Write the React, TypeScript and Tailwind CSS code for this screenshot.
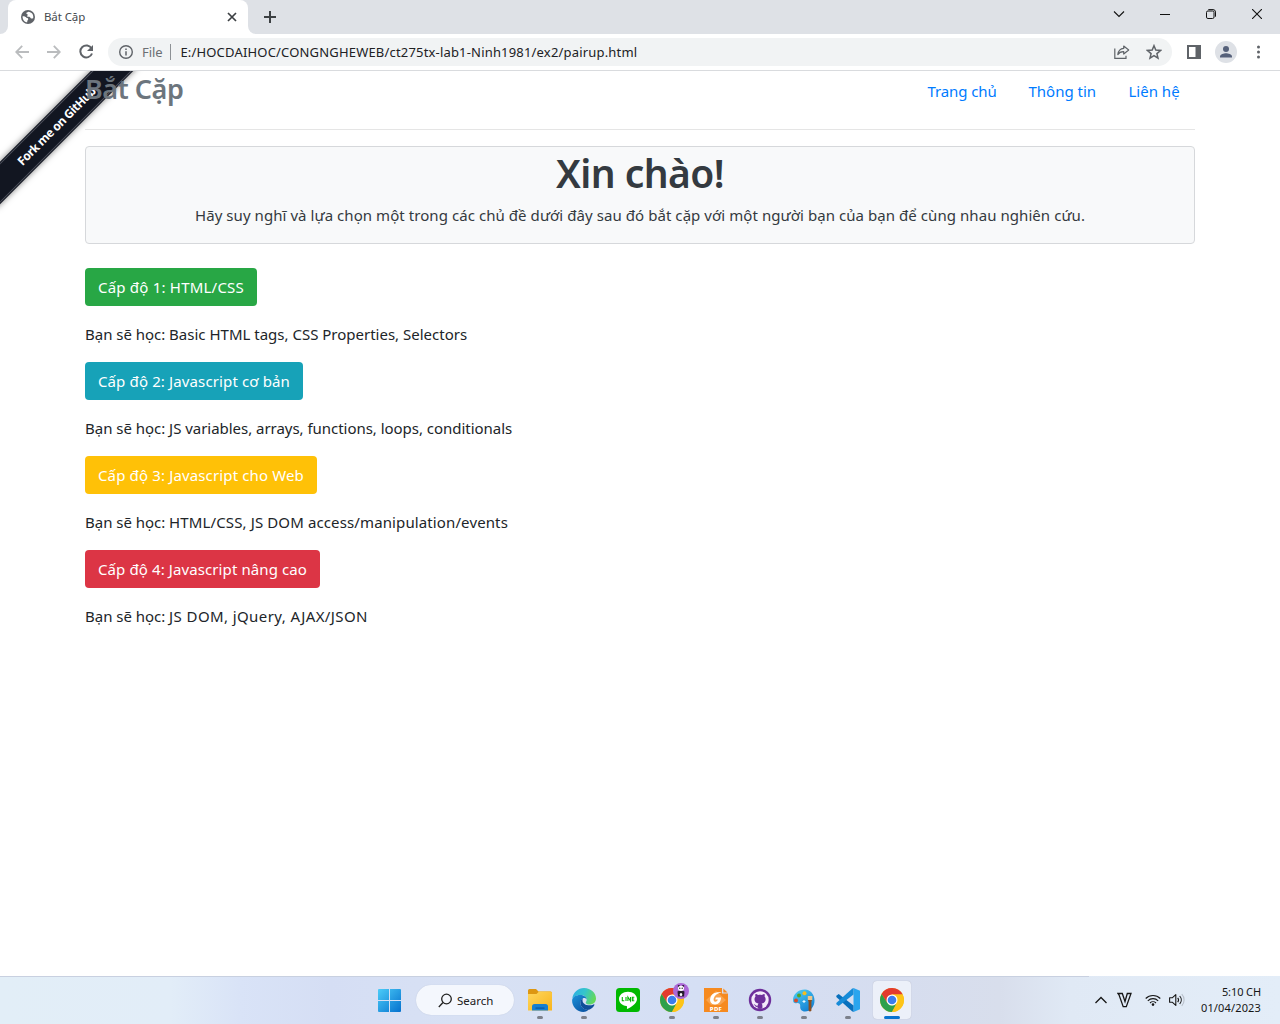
import type { ReactNode } from "react";

const levels = [
  {
    label: "Cấp độ 1: HTML/CSS",
    button: "w-[172px] bg-[#28a745] tracking-[0.21px]",
    intro: "tracking-[-0.02px]",
    text: "Basic HTML tags, CSS Properties, Selectors",
    spacing: "tracking-[0px]",
  },
  {
    label: "Cấp độ 2: Javascript cơ bản",
    button: "w-[218px] bg-[#17a2b8] tracking-[0.13px]",
    intro: "tracking-[-0.02px]",
    text: "JS variables, arrays, functions, loops, conditionals",
    spacing: "tracking-[-0.034px]",
  },
  {
    label: "Cấp độ 3: Javascript cho Web",
    button: "w-[232px] bg-[#ffc107] tracking-[0.14px]",
    intro: "tracking-[-0.02px]",
    text: "HTML/CSS, JS DOM access/manipulation/events",
    spacing: "tracking-[0.12px]",
  },
  {
    label: "Cấp độ 4: Javascript nâng cao",
    button: "w-[235px] bg-[#dc3545] tracking-[0.1px]",
    intro: "tracking-[-0.02px]",
    text: "JS DOM, jQuery, AJAX/JSON",
    spacing: "tracking-[0.4px]",
  },
];

function GlobeIcon() {
  return (
    <svg width="14" height="14" viewBox="0 0 14 14">
      <circle cx="7" cy="7" r="7" fill="#5f6368" />
      <path d="M1.6 6.2c1.7-.2 3 .4 3.7 1.4.5.8 1.700.4 1.900 1.300.2.9-.8 1.300-.9 2.100l-.1 1.300C3.400 12 1.400 9.500 1.600 6.200z" fill="#fff" />
      <path d="M7.300 1.700c-.9.7-2 .8-2 1.600 0 .9 1.300.7 1.400 1.500.1.700-.7 1-.5 1.600.3.800 1.700.2 2.500.5.900.400.700 1.300 1.500 1.600.700.200 1.300-.3 2-.2C13 4.800 10.800 2 7.300 1.700z" fill="#fff" />
    </svg>
  );
}

function TabStrip() {
  return (
    <div className="flex h-[34px] bg-[#dee1e6]">
      <div className="flex w-2 items-end bg-white">
        <div className="h-full w-full rounded-br-lg bg-[#dee1e6]" />
      </div>
      <div className="flex w-60 items-center rounded-t-lg bg-white pl-[13px] pr-[11px]">
        <GlobeIcon />
        <span className="ml-[9px] flex-1 text-[11.5px] leading-4 tracking-[-0.1px] text-[#45494d]">Bắt Cặp</span>
        <svg width="10" height="10" viewBox="0 0 10 10" stroke="#3c4043" strokeWidth="1.7">
          <path d="M1 1l8 8M9 1L1 9" />
        </svg>
      </div>
      <div className="w-2 bg-white">
        <div className="h-full w-full rounded-bl-lg bg-[#dee1e6]" />
      </div>
      <div className="flex w-7 items-center justify-center">
        <svg width="12" height="12" viewBox="0 0 12 12" stroke="#3c4043" strokeWidth="2">
          <path d="M6 0v12M0 6h12" />
        </svg>
      </div>
      <div className="ml-auto flex h-7 items-center text-[#111]">
        <span className="flex w-[46px] justify-center">
          <svg width="12" height="8" viewBox="0 0 12 8" fill="none" stroke="currentColor" strokeWidth="1.1">
            <path d="M1 1.500l5 5 5-5" />
          </svg>
        </span>
        <span className="flex w-[46px] justify-center">
          <svg width="10" height="2" viewBox="0 0 10 2" fill="currentColor" shapeRendering="crispEdges">
            <path d="M0 1h10v1H0z" />
          </svg>
        </span>
        <span className="flex w-[46px] justify-center">
          <svg width="10" height="10" viewBox="0 0 10 10" fill="none" stroke="currentColor">
            <rect x=".5" y="2" width="7.500" height="7.500" rx="1.400" />
            <path d="M2.300.6h4.700a2.500 2.500 0 0 1 2.500 2.500v4.600" />
          </svg>
        </span>
        <span className="flex w-[46px] justify-center">
          <svg width="10" height="10" viewBox="0 0 10 10" fill="none" stroke="currentColor" strokeWidth="1.100">
            <path d="M0 0l10 10M10 0L0 10" />
          </svg>
        </span>
      </div>
    </div>
  );
}

function AddressBar() {
  return (
    <div className="flex h-[37px] items-center border-b border-[#d9dbde] bg-white">
      <svg className="ml-[15px]" width="14" height="14" viewBox="0 0 14 14" fill="none" stroke="#babcbe" strokeWidth="1.800">
        <path d="M14 7H1.500M7.200.8L1.200 7l6 6.200" />
      </svg>
      <svg className="ml-[18px]" width="14" height="14" viewBox="0 0 14 14" fill="none" stroke="#babcbe" strokeWidth="1.800">
        <path d="M0 7h12.500M6.800.8l6 6.200-6 6.200" />
      </svg>
      <svg className="ml-[17px]" width="16" height="16" viewBox="0 0 16 16" fill="none" stroke="#5f6368" strokeWidth="2">
        <path d="M13.600 4.500A6 6 0 1 0 14 9.500" />
        <path d="M15 1v6H9z" fill="#5f6368" stroke="none" />
      </svg>
      <div className="ml-3.5 flex h-7 w-[1064px] items-center rounded-full bg-[#f1f3f4] pl-[11px] pr-2.5">
        <svg width="14" height="14" viewBox="0 0 14 14" fill="none" stroke="#5f6368" strokeWidth="1.400">
          <circle cx="7" cy="7" r="6.300" />
          <path d="M7 6.200v4.200M7 3.400v1.500" strokeWidth="1.500" />
        </svg>
        <span className="ml-[9px] text-[13px] leading-5 tracking-[-0.1px] text-[#6b6f73]">File</span>
        <span className="ml-2 h-4 w-px bg-[#8d9195]" />
        <span className="ml-[9px] flex-1 whitespace-nowrap text-[13px] leading-5 tracking-[0.18px] text-[#202124]">
          E:/HOCDAIHOC/CONGNGHEWEB/ct275tx-lab1-Ninh1981/ex2/pairup.html
        </span>
        <svg width="16" height="14" viewBox="0 0 16 14" fill="none" stroke="#5f6368" strokeWidth="1.200">
          <path d="M.8 3.500v9.800H12v-2.500" />
          <path d="M9.700 1l5 4-5 4V6.600C7 6.500 5.200 7.400 3.800 9.600 4.300 6 6.300 3.700 9.700 3.400z" strokeLinejoin="round" />
        </svg>
        <svg className="ml-4" width="16" height="16" viewBox="0 0 16 16" fill="none" stroke="#5f6368" strokeWidth="1.500">
          <path d="M8 1.700l1.800 4.400 4.700.4-3.600 3.100 1.100 4.600L8 11.700l-4 2.500 1.100-4.600L1.500 6.500l4.700-.4z" />
        </svg>
      </div>
      <svg className="ml-[15px]" width="14" height="14" viewBox="0 0 14 14" fill="#5f6368">
        <path d="M0 0h14v14H0zM2 2v10h6.500V2z" fillRule="evenodd" />
      </svg>
      <svg className="ml-3.5" width="22" height="22" viewBox="0 0 22 22">
        <circle cx="11" cy="11" r="11" fill="#dee1e6" />
        <g fill="#56617a">
          <circle cx="11" cy="8" r="3" />
          <path d="M5 16.500v-1.200c0-2 4-3.100 6-3.100s6 1.100 6 3.100v1.200z" />
        </g>
      </svg>
      <svg className="ml-5" width="4" height="14" viewBox="0 0 4 14" fill="#5f6368">
        <circle cx="1.500" cy="2" r="1.500" />
        <circle cx="1.500" cy="7" r="1.500" />
        <circle cx="1.500" cy="12" r="1.500" />
      </svg>
    </div>
  );
}

function Ribbon() {
  return (
    <div className="absolute left-0 top-0 size-[160px] overflow-hidden">
      <div className="absolute left-[-44px] top-[41px] flex h-[30px] w-[200px] -rotate-45 items-center bg-[#121621] shadow-[0_0_6px_rgba(0,0,0,0.5)]">
        <div className="flex h-[28px] w-full items-center justify-center border-y border-[#50535e] pl-0.5 text-[12px] font-bold tracking-[-0.45px] text-white">
          Fork me on GitHub
        </div>
      </div>
    </div>
  );
}

function Page() {
  return (
    <main className="relative flex-1 overflow-hidden bg-white">
      <Ribbon />
      <div className="relative mx-auto w-[1110px] text-[15px] leading-6">
        <header className="flex h-[59px] justify-between border-b border-[#e5e5e5]">
          <h3 className="mt-[1px] text-[27px] font-semibold leading-[34px] tracking-[-0.45px] text-[#6c757d]">Bắt Cặp</h3>
          <nav className="mt-2 flex gap-8 pr-[15.5px] text-[#007bff]">
            <a className="w-[69px] whitespace-nowrap tracking-[-0.11px]">Trang chủ</a>
            <a className="w-[68px] whitespace-nowrap">Thông tin</a>
            <a className="w-[51px] whitespace-nowrap">Liên hệ</a>
          </nav>
        </header>
        <section className="mt-4 h-[98px] rounded border border-[#d6d8db] bg-[#f8f9fa] text-center text-[#343a40]">
          <h1 className="mt-[2px] text-[39px] font-semibold leading-[48px] tracking-[-0.55px]">Xin chào!</h1>
          <p className="mt-[6px] tracking-[0.0625px]">
            Hãy suy nghĩ và lựa chọn một trong các chủ đề dưới đây sau đó bắt cặp với một người bạn của bạn để cùng nhau nghiên cứu.
          </p>
        </section>
        <div className="mt-6 flex flex-col gap-4">
          {levels.map((l) => (
            <div key={l.label} className="flex flex-col items-start gap-4">
              <button className={`h-[38px] whitespace-nowrap rounded text-white ${l.button}`}>{l.label}</button>
              <p className={`text-[#212529] ${l.spacing}`}>
                <span className={l.intro}>Bạn sẽ học: </span>
                {l.text}
              </p>
            </div>
          ))}
        </div>
      </div>
    </main>
  );
}

function ChromeLogo() {
  return (
    <svg width="24" height="24" viewBox="0 0 24 24">
      <circle cx="12" cy="12" r="12" fill="#fbc116" />
      <path d="M12 6.500h10.650A12 12 0 0 0 1.610 6l5.600 9z" fill="#e33b2e" />
      <path d="M1.610 6A12 12 0 0 0 12 24l4.800-8.300-4.800 1.800-4.800-2.700z" fill="#2da04c" />
      <path d="M12 24A12 12 0 0 0 22.650 6.500H12l4.800 8.300z" fill="#fdc418" />
      <circle cx="12" cy="12" r="5.500" fill="#fff" />
      <circle cx="12" cy="12" r="4.300" fill="#3b7ded" />
    </svg>
  );
}

function FolderIcon() {
  return (
    <svg width="24" height="24" viewBox="0 0 24 24">
      <defs>
        <linearGradient id="folder" x1="0" y1="0" x2="1" y2="1">
          <stop offset="0" stopColor="#ffd75e" />
          <stop offset="1" stopColor="#f8b41c" />
        </linearGradient>
      </defs>
      <path d="M0 2.500Q0 1 1.500 1H8l2.500 2.500H22.500Q24 3.500 24 5v5H0z" fill="#dd9712" />
      <path d="M0 6h8.500l2.500-2.500h11.500Q24 3.500 24 5v17.500H0z" fill="url(#folder)" />
      <path d="M4 22.500v-4Q4 16 6.500 16h11q2.500 0 2.500 2.500v4z" fill="#177fd0" />
      <path d="M7.500 19.500h9v1.200h-9z" fill="#0b559d" />
    </svg>
  );
}

function EdgeIcon() {
  return (
    <svg width="24" height="24" viewBox="0 0 24 24">
      <defs>
        <linearGradient id="edgeTop" x1="0" y1=".2" x2="1" y2=".5">
          <stop offset="0" stopColor="#2caee5" />
          <stop offset=".5" stopColor="#35c5cb" />
          <stop offset="1" stopColor="#65d957" />
        </linearGradient>
        <linearGradient id="edgeLow" x1="0" y1="0" x2=".7" y2="1">
          <stop offset="0" stopColor="#1b92da" />
          <stop offset="1" stopColor="#0b57a6" />
        </linearGradient>
      </defs>
      <path d="M.3 10.500C1.200 4.500 6 0 12 0c7 0 12 5.100 12 10.500 0 3.700-2.800 6-6.300 6-2.700 0-4-1-4-1.800 0-.7 1-1.200 1-3.100C14.700 9 12 6.900 8.700 6.900c-4 0-7 1.600-8.400 3.600z" fill="url(#edgeTop)" />
      <path d="M.1 12.500C.2 9 3.600 6.900 8.200 6.900c3.400 0 6.200 1.600 6.500 4.500-1-1.300-2.200-1.600-3.200-1.400-2.200 1.100-3.200 3.400-3 5.500.3 4 4 6.500 7.800 6.500-1.300 1.300-3.200 2-5 2C5 24 0 18.500.1 12.500z" fill="url(#edgeLow)" />
      <path d="M10.800 10.200c-2.200 1.500-2.500 3.500-2.300 5.300.3 4 4 7 8.500 6.300 2.200-.8 4.200-2.500 5.300-4.600.4-.8-.2-1-.8-.7-4.500 2.100-11 .3-11-4.300 0-.8.100-1.500.300-2z" fill="#104f99" />
    </svg>
  );
}

function LineIcon() {
  return (
    <svg width="24" height="24" viewBox="0 0 24 24">
      <rect width="24" height="24" rx="3.500" fill="#00b900" />
      <path d="M12 3.800c-5 0-9 3.200-9 7.200 0 3.500 3.100 6.500 7.400 7.100 1 .2.700 1 .5 2.200-.1.600.3.700.8.500 2.300-1.200 9.300-5 9.300-9.800 0-4-4-7.200-9-7.200z" fill="#fff" />
      <path d="M6.300 9v3.700h2M10 9v4M11.900 13V9l2.600 4V9M18.300 9.200h-2v3.500h2M16.300 11h1.800" fill="none" stroke="#00b900" strokeWidth="1.100" />
    </svg>
  );
}

function FoxitIcon() {
  return (
    <svg width="24" height="24" viewBox="0 0 24 24">
      <path d="M0 0h18v5.500h6V24H0z" fill="#f68a1f" />
      <path d="M19.300 .5l4.200 4H19.300z" fill="#f68a1f" />
      <path d="M2 12L12 3l10 9-6 5H7z" fill="#f9a34c" />
      <path d="M17.800 4.500c-6.300-1-10.300 1.200-11.500 5.500-.9 3.600 1 6.700 4.900 6.500 3.600-.2 5.700-2.900 5.900-7h-5.200l-.7 2.100h2.600c-.4 1.300-1.200 2.100-2.300 2.100-1.800 0-2.200-1.600-1.700-3.500.8-2.700 3.500-5 8-5.700z" fill="#fff" />
      <text x="12" y="22.800" textAnchor="middle" fontSize="6" fontWeight="800" letterSpacing=".3" fill="#fff">PDF</text>
    </svg>
  );
}

function GithubIcon() {
  return (
    <svg width="24" height="24" viewBox="0 0 24 24">
      <circle cx="12" cy="12" r="11.200" fill="#6e2f9b" />
      <circle cx="12" cy="12" r="8.700" fill="#f3eafa" />
      <path d="M7.500 5.900c1 0 2 .6 2.700 1.100 1.200-.3 2.500-.3 3.600 0 .7-.5 1.700-1.100 2.700-1.100.4 1 .3 1.900.1 2.500 2.200 2.600.8 6.900-3 7.200.6.500.8 1.200.8 2v3c-1.600.5-3.200.5-4.800 0v-1.800c-2 .4-2.500-.8-3-1.600-.3-.5-.7-.8-1-1 1.600-.3 2 1.500 3 1.600.4.100.8 0 1.100-.2.100-.8.300-1.400.8-2-3.800-.3-5.200-4.600-3-7.200-.3-.6-.4-1.500 0-2.500z" fill="#6e2f9b" />
    </svg>
  );
}

function PaintIcon() {
  return (
    <svg width="24" height="24" viewBox="0 0 24 24">
      <defs>
        <linearGradient id="palette" x1="0" y1="0" x2=".6" y2="1">
          <stop offset="0" stopColor="#50d0f4" />
          <stop offset="1" stopColor="#1583d4" />
        </linearGradient>
      </defs>
      <path d="M13 1.500C6 1.500 1 6.500 1 12c0 2.500 1.500 3.700 3.500 3.200 2-.5 4 .6 3.700 2.800C7.800 21 9.500 23.500 13 23.500c5.500 0 9.500-5 9.500-11S18.500 1.500 13 1.500z" fill="url(#palette)" />
      <circle cx="4" cy="12.500" r="2" fill="#d84b2a" />
      <circle cx="7" cy="7.500" r="2" fill="#51a52b" />
      <circle cx="12.500" cy="5.200" r="2" fill="#f2bd20" />
      <path d="M12 12v3M10.500 13.500h3" stroke="#e4f7ff" strokeWidth="1.100" />
      <path d="M15.800 8h4.500v4h-4.500z" fill="#eac58d" />
      <path d="M16 12h4l-.6 2v8.700q-1.400 1.500-2.800 0V14z" fill="#8b4e20" />
    </svg>
  );
}

function CodeIcon() {
  return (
    <svg width="24" height="24" viewBox="0 0 24 24">
      <path d="M17.500 0L24 2.800v18.400L17.500 24z" fill="#2aa5ee" />
      <path d="M17.500 17.500L2.700 6 .3 7.700v1.200L16 23.300l1.500.7z" fill="#0870bd" />
      <path d="M17.500 6.500L2.700 18 .3 16.300v-1.200L16 .7l1.500-.7z" fill="#168bd8" />
    </svg>
  );
}

function StartIcon() {
  return (
    <svg width="24" height="24" viewBox="0 0 24 24">
      <defs>
        <linearGradient id="start" gradientUnits="userSpaceOnUse" x1="0" y1="0" x2="24" y2="24">
          <stop offset="0" stopColor="#4fd0fa" />
          <stop offset="1" stopColor="#0571ce" />
        </linearGradient>
      </defs>
      <path d="M1 2q0-1 1-1h10v11H1zM13 1h10q1 0 1 1v10H13zM1 13h11v11H2q-1 0-1-1zM13 13h11v10q0 1-1 1H13z" fill="url(#start)" />
    </svg>
  );
}

function TaskItem({ children, active = false }: { children: ReactNode; active?: boolean }) {
  return (
    <div className={`relative flex h-[38px] w-[38px] flex-col items-center rounded pt-[7px] ${active ? "bg-[#ecf0f9] shadow-[0_0_1px_#aab]" : ""}`}>
      {children}
      <span className={`mt-1 h-[3px] shrink-0 rounded-full ${active ? "w-4 bg-[#0873cf]" : "w-1.5 bg-[#7c808b]"}`} />
    </div>
  );
}

function ProfileBadge() {
  return (
    <svg className="absolute left-[20px] top-[2px]" width="16" height="16" viewBox="0 0 16 16">
      <circle cx="8" cy="8" r="8" fill="#ac69d7" />
      <path d="M4.500 8.500q3.500-2 7 0l-.4 5H5z" fill="#241c2c" />
      <circle cx="5.800" cy="3" r="1.100" fill="#241c2c" />
      <circle cx="10.200" cy="3" r="1.100" fill="#241c2c" />
      <ellipse cx="8" cy="5.300" rx="3" ry="2.600" fill="#fff" />
      <circle cx="6.800" cy="5.300" r=".7" fill="#222" />
      <circle cx="9.200" cy="5.300" r=".7" fill="#222" />
      <ellipse cx="8" cy="11.500" rx="1.300" ry="1.600" fill="#fff" />
    </svg>
  );
}

function Taskbar() {
  return (
    <footer className="flex h-12 bg-[linear-gradient(90deg,#e2eef7_0px,#e2edf8_170px,#d9e3f7_240px,#d5def4_330px,#d8e1f4_460px,#d5dff4_700px,#d6ddef_900px,#d8deec_1000px,#e0e9f5_1070px,#e3edf8_1280px)]">
      <div className="flex w-[1089px] items-start border-t border-[#c8d0e0] pl-[377px] pt-[4px]">
        <div className="pt-[7px]">
          <StartIcon />
        </div>
        <div className="ml-[15px] mt-[4px] flex h-[30px] w-[98px] items-center rounded-full bg-[#f4f7fd] pl-[22px] shadow-[0_0_1px_#b4bfd5]">
          <svg width="15" height="15" viewBox="0 0 15 15" fill="none" stroke="#222" strokeWidth="1.300">
            <circle cx="8.500" cy="6" r="4.800" />
            <path d="M5 9.500L.8 14" />
          </svg>
          <span className="ml-1 mt-px text-[11.5px] leading-4 text-[#202020]">Search</span>
        </div>
        <div className="ml-[7px] flex gap-1.5">
          <TaskItem><FolderIcon /></TaskItem>
          <TaskItem><EdgeIcon /></TaskItem>
          <div className="w-[38px] pl-[7px] pt-[7px]"><LineIcon /></div>
          <TaskItem><ChromeLogo /><ProfileBadge /></TaskItem>
          <TaskItem><FoxitIcon /></TaskItem>
          <TaskItem><GithubIcon /></TaskItem>
          <TaskItem><PaintIcon /></TaskItem>
          <TaskItem><CodeIcon /></TaskItem>
          <TaskItem active><ChromeLogo /></TaskItem>
        </div>
      </div>
      <div className="flex flex-1 items-center pl-[5px] text-[#161616]">
        <svg width="14" height="8" viewBox="0 0 14 8" fill="none" stroke="currentColor" strokeWidth="1.300">
          <path d="M1.500 7L7 1.500 12.500 7" />
        </svg>
        <svg className="ml-[9px]" width="15" height="16" viewBox="0 0 15 16" fill="none" stroke="currentColor" strokeWidth="1.300">
          <path d="M1 1.500h4.300L8 9.500l2.300-8H14L9.300 14.700H6.200L2 2.900z" />
        </svg>
        <svg className="ml-[13px]" width="16" height="12" viewBox="0 0 16 12" fill="none" stroke="currentColor" strokeWidth="1.100">
          <path d="M.7 4.500a10.300 10.300 0 0 1 14.600 0M2.800 6.800a7.400 7.400 0 0 1 10.400 0M5 9a4.300 4.300 0 0 1 6 0" />
          <circle cx="8" cy="10.600" r="1.300" fill="currentColor" stroke="none" />
        </svg>
        <svg className="ml-2" width="16" height="14" viewBox="0 0 16 14" fill="none" stroke="currentColor" strokeWidth="1.100">
          <path d="M.6 4.800h2.600L6.800 1.600v10.800L3.200 9.200H.6z" strokeLinejoin="round" />
          <path d="M8.700 4.800a3.500 3.500 0 0 1 0 4.400M10.700 3a6 6 0 0 1 0 8" />
          <path d="M12.800 1.200a8.500 8.500 0 0 1 0 11.600" stroke="#b9c0ca" />
        </svg>
        <div className="ml-auto flex flex-col items-end pb-px pr-[19px] text-[11px] leading-4">
          <span className="tracking-[-0.1px]">5:10 CH</span>
          <span className="tracking-[0.15px]">01/04/2023</span>
        </div>
      </div>
    </footer>
  );
}

export default function App() {
  return (
    <div className="flex h-[1024px] w-[1280px] flex-col overflow-hidden font-['Noto_Sans','Open_Sans',sans-serif]">
      <TabStrip />
      <AddressBar />
      <Page />
      <Taskbar />
    </div>
  );
}
